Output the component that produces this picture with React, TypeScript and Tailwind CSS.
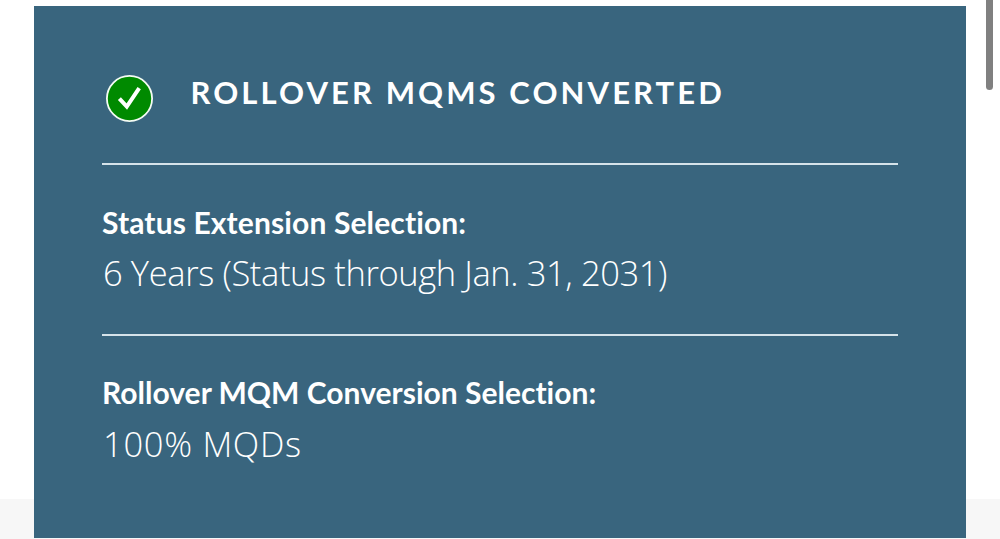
interface Selection {
  label: string;
  value: string;
  labelStyle: string;
  valueStyle: string;
}

const selections: Selection[] = [
  {
    label: "Status Extension Selection:",
    value: "6 Years (Status through Jan. 31, 2031)",
    labelStyle: "leading-[46px] tracking-[0.13px]",
    valueStyle: "tracking-[-0.39px]",
  },
  {
    label: "Rollover MQM Conversion Selection:",
    value: "100% MQDs",
    labelStyle: "leading-[44px] tracking-[0.01px]",
    valueStyle: "mt-[2px] tracking-[0.7px]",
  },
];

function CheckBadge() {
  return (
    <svg className="mt-[69px] ml-1 size-[47px] shrink-0" viewBox="0 0 47 47" fill="none">
      <circle cx="23.5" cy="23.5" r="22.6" fill="#008a00" stroke="#f4fbf4" strokeWidth="1.8" />
      <path d="M13.4 23.6 L20.8 31.6 L33.2 13.2" stroke="#fff" strokeWidth="4" />
    </svg>
  );
}

export default function App() {
  return (
    <div className="flex h-[539px] overflow-hidden bg-white bg-[linear-gradient(to_bottom,#fff_499px,#f7f7f7_499px)] pt-1.5 pl-[34px] text-white">
      <main className="h-[532px] w-[932px] bg-[#39657e] px-[68px]">
        <header className="flex h-[157px] items-start">
          <CheckBadge />
          <h1 className="mt-[64px] ml-[37.5px] font-['Lato',sans-serif] text-[31px] leading-[44px] font-bold tracking-[3.1px] whitespace-nowrap">
            ROLLOVER MQMS CONVERTED
          </h1>
        </header>

        {selections.map((item) => (
          <section key={item.label} className="h-[171px] w-[796px] border-t-2 border-[#d6e3ea] pt-[34px] whitespace-nowrap">
            <h2 className={`font-['Lato',sans-serif] text-[30px] font-bold ${item.labelStyle}`}>
              {item.label}
            </h2>
            <p className={`pl-px font-['Open_Sans',sans-serif] text-[34.5px] leading-[56px] font-light ${item.valueStyle}`}>
              {item.value}
            </p>
          </section>
        ))}
      </main>

      {/* scrollbar thumb */}
      <div className="-mt-3 ml-5 h-[96px] w-[7px] rounded-full bg-[#808080]" />
    </div>
  );
}
